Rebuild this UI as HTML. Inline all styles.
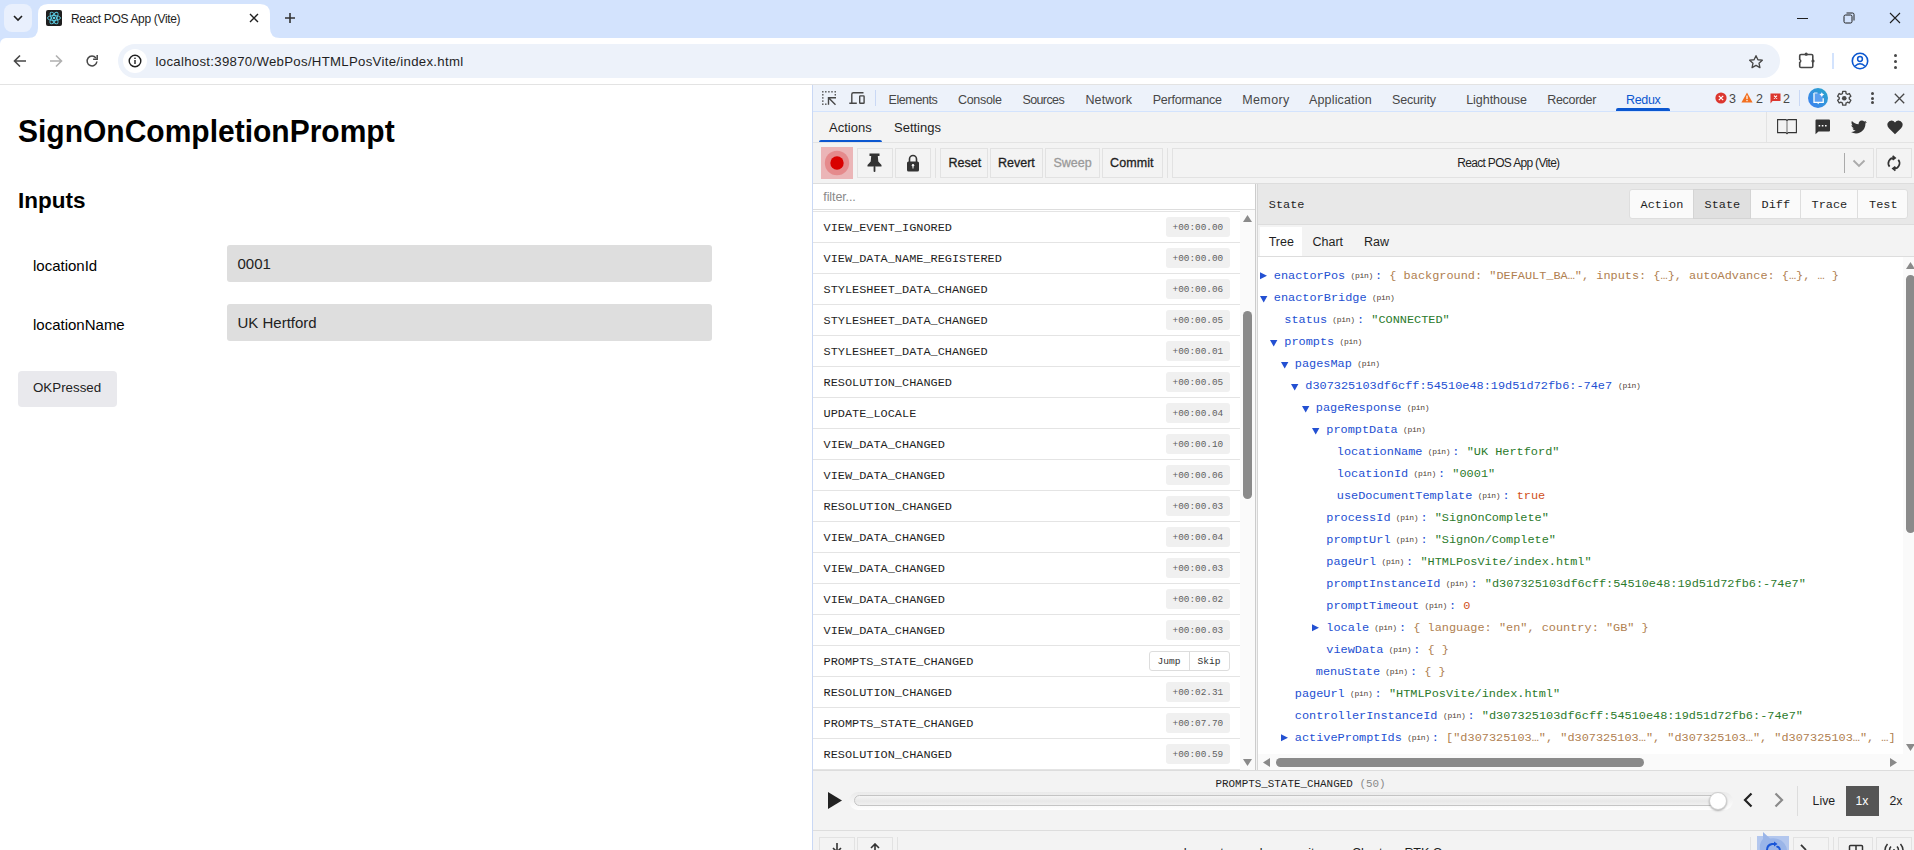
<!DOCTYPE html><html><head><meta charset="utf-8"><style>html,body{margin:0;padding:0;}body{width:1914px;height:850px;overflow:hidden;position:relative;background:#fff;font-family:"Liberation Sans",sans-serif;}div,svg{box-sizing:border-box;}svg{position:absolute;}</style></head><body>
<div style="position:absolute;left:0px;top:0px;width:1914px;height:38px;background:#d3e3fd"></div>
<div style="position:absolute;left:4px;top:4px;width:28px;height:28px;background:#e9f0fd;border-radius:8px"></div>
<svg style="left:12px;top:14px" width="12" height="8" viewBox="0 0 12 8"><path d="M2 2 L6 6 L10 2" fill="none" stroke="#1f1f1f" stroke-width="1.6"/></svg>
<svg style="left:28px;top:4px" width="252" height="34" viewBox="0 0 252 34"><path d="M0 34 Q10 34 10 24 L10 10 Q10 0 20 0 L232 0 Q242 0 242 10 L242 24 Q242 34 252 34 Z" fill="#ffffff"/></svg>
<div style="position:absolute;left:46px;top:10px;width:16px;height:16px;background:#1f1f1f;border-radius:2px"></div>
<svg style="left:46px;top:10px" width="16" height="16" viewBox="0 0 16 16"><g fill="none" stroke="#5ccfe6" stroke-width="0.9"><ellipse cx="8" cy="8" rx="6.5" ry="2.5"/><ellipse cx="8" cy="8" rx="6.5" ry="2.5" transform="rotate(60 8 8)"/><ellipse cx="8" cy="8" rx="6.5" ry="2.5" transform="rotate(120 8 8)"/></g><circle cx="8" cy="8" r="1.3" fill="#5ccfe6"/></svg>
<div style="position:absolute;left:71px;top:13.34px;font:normal 12px/12px 'Liberation Sans', sans-serif;color:#1f1f1f;white-space:pre;letter-spacing:-0.327px;">React POS App (Vite)</div>
<svg style="left:249px;top:13px" width="10" height="10" viewBox="0 0 10 10"><path d="M1 1 L9 9 M9 1 L1 9" stroke="#1f1f1f" stroke-width="1.4"/></svg>
<svg style="left:285px;top:13px" width="10" height="10" viewBox="0 0 10 10"><path d="M5 0 V10 M0 5 H10" stroke="#333" stroke-width="1.6"/></svg>
<div style="position:absolute;left:1797px;top:18px;width:11px;height:1px;background:#1f1f1f"></div>
<svg style="left:1843px;top:12px" width="12" height="12" viewBox="0 0 12 12"><rect x="1" y="3" width="8" height="8" rx="1.5" fill="none" stroke="#1f1f1f" stroke-width="1"/><path d="M3.5 1 H9.5 Q11 1 11 2.5 V8.5" fill="none" stroke="#1f1f1f" stroke-width="1"/></svg>
<svg style="left:1889px;top:12px" width="12" height="12" viewBox="0 0 12 12"><path d="M1 1 L11 11 M11 1 L1 11" stroke="#1f1f1f" stroke-width="1.1"/></svg>
<div style="position:absolute;left:0px;top:38px;width:1914px;height:46px;background:#ffffff"></div>
<div style="position:absolute;left:0px;top:84px;width:1914px;height:1px;background:#e3e3e3"></div>
<svg style="left:0px;top:38px" width="6" height="6" viewBox="0 0 6 6"><path d="M0 0 H6 A6 6 0 0 0 0 6 Z" fill="#d3e3fd"/></svg>
<svg style="left:13px;top:54px" width="14" height="14" viewBox="0 0 14 14"><path d="M13 7 H2 M7 1.5 L1.5 7 L7 12.5" fill="none" stroke="#474747" stroke-width="1.6"/></svg>
<svg style="left:49px;top:54px" width="14" height="14" viewBox="0 0 14 14"><path d="M1 7 H12 M7 1.5 L12.5 7 L7 12.5" fill="none" stroke="#b0b0b0" stroke-width="1.6"/></svg>
<svg style="left:85px;top:54px" width="14" height="14" viewBox="0 0 14 14"><path d="M11.9 7.5 A4.9 4.9 0 1 1 10.9 4" fill="none" stroke="#474747" stroke-width="1.5"/><path d="M12.2 1 V5.3 H8.1" fill="none" stroke="#474747" stroke-width="1.5"/></svg>
<div style="position:absolute;left:118px;top:44px;width:1662px;height:34px;background:#edf2fa;border-radius:17px"></div>
<div style="position:absolute;left:123px;top:49px;width:24px;height:24px;background:#ffffff;border-radius:12px"></div>
<svg style="left:128px;top:54px" width="14" height="14" viewBox="0 0 14 14"><circle cx="7" cy="7" r="5.8" fill="none" stroke="#1f1f1f" stroke-width="1.4"/><rect x="6.3" y="6" width="1.4" height="4" fill="#1f1f1f"/><rect x="6.3" y="3.6" width="1.4" height="1.4" fill="#1f1f1f"/></svg>
<div style="position:absolute;left:155.5px;top:55.32px;font:normal 13.2px/13.2px 'Liberation Sans', sans-serif;color:#1f1f1f;white-space:pre;letter-spacing:0.306px;">localhost:39870/WebPos/HTMLPosVite/index.html</div>
<svg style="left:1748px;top:54px" width="16" height="16" viewBox="0 0 24 24"><path d="M12 2.5 L14.9 8.6 L21.5 9.3 L16.5 13.8 L17.9 20.4 L12 17 L6.1 20.4 L7.5 13.8 L2.5 9.3 L9.1 8.6 Z" fill="none" stroke="#474747" stroke-width="2" stroke-linejoin="round"/></svg>
<svg style="left:1797px;top:51px" width="20" height="19" viewBox="0 0 20 19"><path d="M4 3.5 H14.5 Q15.8 3.5 15.8 4.8 V15.2 Q15.8 16.5 14.5 16.5 H4 Q2.7 16.5 2.7 15.2 V11.6 A1.8 1.8 0 0 0 2.7 8.4 V4.8 Q2.7 3.5 4 3.5 Z" fill="none" stroke="#474747" stroke-width="1.6"/><circle cx="9.2" cy="3.2" r="1.6" fill="#474747"/><circle cx="16" cy="10" r="1.6" fill="#474747"/></svg>
<div style="position:absolute;left:1832px;top:53px;width:2px;height:16px;background:#d3e3fd"></div>
<svg style="left:1851px;top:52px" width="18" height="18" viewBox="0 0 18 18"><circle cx="9" cy="9" r="7.7" fill="none" stroke="#0b57d0" stroke-width="1.6"/><circle cx="9" cy="7" r="2.4" fill="none" stroke="#0b57d0" stroke-width="1.5"/><path d="M4.2 14 Q9 9.5 13.8 14" fill="none" stroke="#0b57d0" stroke-width="1.5"/></svg>
<div style="position:absolute;left:1894px;top:54px;width:3px;height:3px;background:#474747;border-radius:50%"></div>
<div style="position:absolute;left:1894px;top:60px;width:3px;height:3px;background:#474747;border-radius:50%"></div>
<div style="position:absolute;left:1894px;top:66px;width:3px;height:3px;background:#474747;border-radius:50%"></div>
<div style="position:absolute;left:18px;top:117.00px;font:bold 30px/30px 'Liberation Sans', sans-serif;color:#000;white-space:pre;letter-spacing:0.000px;transform:scaleY(1.035);transform-origin:0 24px;">SignOnCompletionPrompt</div>
<div style="position:absolute;left:18px;top:189.75px;font:bold 22.5px/22.5px 'Liberation Sans', sans-serif;color:#000;white-space:pre;letter-spacing:0.000px;">Inputs</div>
<div style="position:absolute;left:33px;top:258.20px;font:normal 15px/15px 'Liberation Sans', sans-serif;color:#000;white-space:pre;letter-spacing:0.000px;">locationId</div>
<div style="position:absolute;left:33px;top:316.80px;font:normal 15px/15px 'Liberation Sans', sans-serif;color:#000;white-space:pre;letter-spacing:0.000px;">locationName</div>
<div style="position:absolute;left:227px;top:245px;width:485px;height:37px;background:#dedede;border-radius:3px"></div>
<div style="position:absolute;left:227px;top:304px;width:485px;height:37px;background:#dedede;border-radius:3px"></div>
<div style="position:absolute;left:237.5px;top:256.40px;font:normal 15px/15px 'Liberation Sans', sans-serif;color:#222;white-space:pre;letter-spacing:0.000px;">0001</div>
<div style="position:absolute;left:237.5px;top:315.40px;font:normal 15px/15px 'Liberation Sans', sans-serif;color:#222;white-space:pre;letter-spacing:0.000px;">UK Hertford</div>
<div style="position:absolute;left:18px;top:371px;width:99px;height:36px;background:#e9e9ed;border-radius:4px"></div>
<div style="position:absolute;left:33px;top:381.41px;font:normal 13.333px/13.333px 'Liberation Sans', sans-serif;color:#222;white-space:pre;letter-spacing:0.000px;">OKPressed</div>
<div style="position:absolute;left:812px;top:85px;width:1102px;height:765px;background:#f3f3f3"></div>
<div style="position:absolute;left:812px;top:85px;width:1px;height:765px;background:#c9d8f5"></div>
<div style="position:absolute;left:813px;top:85px;width:1101px;height:26px;background:#edf2fa"></div>
<div style="position:absolute;left:813px;top:111px;width:1101px;height:1px;background:#d3e3fd"></div>
<svg style="left:816px;top:86px" width="56" height="24" viewBox="0 0 56 24"><rect x="6.10" y="5.10" width="1.4" height="1.4" fill="#474747"/><rect x="9.10" y="5.10" width="1.4" height="1.4" fill="#474747"/><rect x="12.20" y="5.10" width="1.4" height="1.4" fill="#474747"/><rect x="15.30" y="5.10" width="1.4" height="1.4" fill="#474747"/><rect x="18.50" y="5.10" width="1.4" height="1.4" fill="#474747"/><rect x="6.10" y="8.10" width="1.4" height="1.4" fill="#474747"/><rect x="6.10" y="11.20" width="1.4" height="1.4" fill="#474747"/><rect x="6.10" y="14.40" width="1.4" height="1.4" fill="#474747"/><rect x="6.10" y="17.50" width="1.4" height="1.4" fill="#474747"/><rect x="9.10" y="17.50" width="1.4" height="1.4" fill="#474747"/><rect x="18.60" y="8.10" width="1.4" height="1.4" fill="#474747"/><path d="M12.5 18.7 V11.7 H20 M12.5 11.7 L19.5 18.7" fill="none" stroke="#474747" stroke-width="1.4"/><path d="M35.8 17.5 V8.3 Q35.8 6.7 37.4 6.7 H47.5 M33.3 17.3 H40.8" fill="none" stroke="#474747" stroke-width="1.4"/><rect x="43.7" y="9.9" width="4.4" height="7.4" rx="0.6" fill="none" stroke="#474747" stroke-width="1.4"/></svg>
<div style="position:absolute;left:875px;top:90px;width:1px;height:16px;background:#c9d8f5"></div>
<div style="position:absolute;left:888.5px;top:93.62px;font:normal 12.5px/12.5px 'Liberation Sans', sans-serif;color:#474747;white-space:pre;letter-spacing:-0.401px;">Elements</div>
<div style="position:absolute;left:958px;top:93.62px;font:normal 12.5px/12.5px 'Liberation Sans', sans-serif;color:#474747;white-space:pre;letter-spacing:-0.310px;">Console</div>
<div style="position:absolute;left:1022.4px;top:93.62px;font:normal 12.5px/12.5px 'Liberation Sans', sans-serif;color:#474747;white-space:pre;letter-spacing:-0.593px;">Sources</div>
<div style="position:absolute;left:1085.4px;top:93.62px;font:normal 12.5px/12.5px 'Liberation Sans', sans-serif;color:#474747;white-space:pre;letter-spacing:0.143px;">Network</div>
<div style="position:absolute;left:1152.7px;top:93.62px;font:normal 12.5px/12.5px 'Liberation Sans', sans-serif;color:#474747;white-space:pre;letter-spacing:-0.226px;">Performance</div>
<div style="position:absolute;left:1242.3px;top:93.62px;font:normal 12.5px/12.5px 'Liberation Sans', sans-serif;color:#474747;white-space:pre;letter-spacing:0.352px;">Memory</div>
<div style="position:absolute;left:1309px;top:93.62px;font:normal 12.5px/12.5px 'Liberation Sans', sans-serif;color:#474747;white-space:pre;letter-spacing:0.155px;">Application</div>
<div style="position:absolute;left:1392px;top:93.62px;font:normal 12.5px/12.5px 'Liberation Sans', sans-serif;color:#474747;white-space:pre;letter-spacing:-0.165px;">Security</div>
<div style="position:absolute;left:1466.2px;top:93.62px;font:normal 12.5px/12.5px 'Liberation Sans', sans-serif;color:#474747;white-space:pre;letter-spacing:-0.040px;">Lighthouse</div>
<div style="position:absolute;left:1547.3px;top:93.62px;font:normal 12.5px/12.5px 'Liberation Sans', sans-serif;color:#474747;white-space:pre;letter-spacing:-0.330px;">Recorder</div>
<div style="position:absolute;left:1626.1px;top:93.62px;font:normal 12.5px/12.5px 'Liberation Sans', sans-serif;color:#0b57d0;white-space:pre;letter-spacing:-0.358px;">Redux</div>
<div style="position:absolute;left:1616px;top:108px;width:54px;height:3px;background:#0b57d0;border-radius:2px 2px 0 0"></div>
<svg style="left:1715px;top:92px" width="12" height="12" viewBox="0 0 12 12"><circle cx="6" cy="6" r="5.6" fill="#dc362e"/><path d="M3.8 3.8 L8.2 8.2 M8.2 3.8 L3.8 8.2" stroke="#fff" stroke-width="1.2"/></svg>
<div style="position:absolute;left:1729px;top:92.92px;font:normal 12.5px/12.5px 'Liberation Sans', sans-serif;color:#474747;white-space:pre;letter-spacing:0.000px;">3</div>
<svg style="left:1741px;top:92px" width="12" height="11" viewBox="0 0 12 11"><path d="M6 0.5 L11.6 10.5 H0.4 Z" fill="#f26f1f"/><rect x="5.4" y="3.6" width="1.2" height="3.6" fill="#fff"/><rect x="5.4" y="8" width="1.2" height="1.2" fill="#fff"/></svg>
<div style="position:absolute;left:1756px;top:92.92px;font:normal 12.5px/12.5px 'Liberation Sans', sans-serif;color:#474747;white-space:pre;letter-spacing:0.000px;">2</div>
<svg style="left:1770px;top:93px" width="12" height="11" viewBox="0 0 12 11"><path d="M0.5 0.5 H10.5 V8 H2.5 L0.5 10.5 Z" fill="#dc362e"/><path d="M4 2.6 L7 5.6 M7 2.6 L4 5.6" stroke="#fff" stroke-width="1.1"/></svg>
<div style="position:absolute;left:1783px;top:93.42px;font:normal 12.5px/12.5px 'Liberation Sans', sans-serif;color:#474747;white-space:pre;letter-spacing:0.000px;">2</div>
<div style="position:absolute;left:1799px;top:90px;width:1px;height:16px;background:#c9d8f5"></div>
<svg style="left:1808px;top:88px" width="20" height="20" viewBox="0 0 20 20"><defs><linearGradient id="g1" x1="0" y1="1" x2="1" y2="0"><stop offset="0" stop-color="#3f7ff2"/><stop offset="1" stop-color="#27a6c9"/></linearGradient></defs><circle cx="10" cy="10" r="10" fill="url(#g1)"/><rect x="6.3" y="5.4" width="8.4" height="9" fill="#5b9ff0"/><path d="M6 5 V14.4 H15.2 V10.2" fill="none" stroke="#fff" stroke-width="1.3"/><path d="M6 5 H9.5" stroke="#cfe3fb" stroke-width="1.2"/><path d="M8.8 14.2 L10.2 16.2 L11.6 14.2 Z" fill="#fff"/><path d="M13.8 4.2 L14.6 5.8 L16.2 6.6 L14.6 7.4 L13.8 9 L13 7.4 L11.4 6.6 L13 5.8 Z" fill="#fff"/></svg>
<svg style="left:1834.8px;top:88.6px" width="18.5" height="18.5" viewBox="0 0 24 24"><path d="M19.4 13a7.5 7.5 0 0 0 0-2l2.1-1.6-2-3.5-2.5 1a7.6 7.6 0 0 0-1.7-1L14.9 3h-4l-.4 2.9a7.6 7.6 0 0 0-1.7 1l-2.5-1-2 3.5L6.4 11a7.5 7.5 0 0 0 0 2l-2.1 1.6 2 3.5 2.5-1a7.6 7.6 0 0 0 1.7 1l.4 2.9h4l.4-2.9a7.6 7.6 0 0 0 1.7-1l2.5 1 2-3.5z" fill="none" stroke="#474747" stroke-width="1.75" stroke-linejoin="round" transform="translate(-0.9 0)"/><circle cx="12" cy="12" r="3" fill="#474747"/></svg>
<div style="position:absolute;left:1870.6px;top:91.9px;width:3.0px;height:3.0px;background:#474747;border-radius:50%"></div>
<div style="position:absolute;left:1870.6px;top:96.5px;width:3.0px;height:3.0px;background:#474747;border-radius:50%"></div>
<div style="position:absolute;left:1870.6px;top:101.0px;width:3.0px;height:3.0px;background:#474747;border-radius:50%"></div>
<svg style="left:1893.5px;top:92.5px" width="11" height="11" viewBox="0 0 11 11"><path d="M0.8 0.8 L10.2 10.2 M10.2 0.8 L0.8 10.2" stroke="#474747" stroke-width="1.3"/></svg>
<div style="position:absolute;left:829px;top:120.99px;font:normal 13px/13px 'Liberation Sans', sans-serif;color:#1f1f1f;white-space:pre;letter-spacing:0.000px;">Actions</div>
<div style="position:absolute;left:894px;top:120.99px;font:normal 13px/13px 'Liberation Sans', sans-serif;color:#1f1f1f;white-space:pre;letter-spacing:0.000px;">Settings</div>
<div style="position:absolute;left:819px;top:140px;width:63px;height:2px;background:#0b57d0;border-radius:2px 2px 0 0"></div>
<div style="position:absolute;left:813px;top:142px;width:1101px;height:1px;background:#e3e3e3"></div>
<div style="position:absolute;left:1766px;top:112px;width:1px;height:30px;background:#e3e3e3"></div>
<svg style="left:1776px;top:118px" width="22" height="18" viewBox="0 0 22 18"><path d="M1.6 1.6 H9.6 Q11 1.6 11 3 Q11 1.6 12.4 1.6 H20.4 V14.6 H12.4 Q11 14.6 11 16 Q11 14.6 9.6 14.6 H1.6 Z" fill="none" stroke="#333" stroke-width="1.1"/><path d="M11 3 V15.6" stroke="#777" stroke-width="1.1"/><path d="M10 15.2 L11 16.6 L12 15.2 Z" fill="#333"/></svg>
<svg style="left:1815px;top:119px" width="16" height="16" viewBox="0 0 16 16"><path d="M0.5 1.5 Q0.5 0.5 1.5 0.5 H14 Q15 0.5 15 1.5 V11.5 Q15 12.5 14 12.5 H3.5 L0.5 15.3 Z" fill="#333"/><rect x="3.6" y="6" width="1.6" height="1.5" fill="#fff"/><rect x="6.8" y="6" width="1.6" height="1.5" fill="#fff"/><rect x="10" y="6" width="1.6" height="1.5" fill="#fff"/></svg>
<svg style="left:1851px;top:120px" width="16" height="14" viewBox="0 0 24 20"><path d="M23.6 2.4c-.9.4-1.8.6-2.8.8 1-.6 1.8-1.6 2.1-2.7-.9.6-2 1-3.1 1.2A4.9 4.9 0 0 0 11.5 6C7.4 5.8 3.8 3.9 1.4 1c-1.3 2.3-.6 5.1 1.5 6.6-.8 0-1.6-.2-2.2-.6 0 2.400 1.7 4.4 3.9 4.900-.7.2-1.500.2-2.200.1.6 2 2.500 3.400 4.600 3.400A9.900 9.900 0 0 1 0 17.400 14 14 0 0 0 7.500 19.600c9.100 0 14.100-7.500 14.100-14.100v-.6c1-.7 1.800-1.600 2.500-2.500z" fill="#333"/></svg>
<svg style="left:1887px;top:119.5px" width="16" height="15" viewBox="0 0 16 15"><path d="M8 14.3 L1.9 8.3 Q-0.4 5.9 0.7 3 Q2 0.4 4.6 0.5 Q6.7 0.6 8 2.6 Q9.3 0.6 11.4 0.5 Q14 0.4 15.3 3 Q16.4 5.9 14.1 8.3 Z" fill="#333"/></svg>
<div style="position:absolute;left:813px;top:183px;width:1101px;height:1px;background:#dddddd"></div>
<div style="position:absolute;left:821px;top:147px;width:32px;height:32px;background:#ebb5b7"></div>
<svg style="left:824px;top:150px" width="26" height="26" viewBox="0 0 26 26"><circle cx="13" cy="13" r="12.2" fill="#e58a8c"/><circle cx="13" cy="13" r="6.7" fill="#d90000"/></svg>
<div style="position:absolute;left:857px;top:148px;width:36px;height:30px;border:1px solid #e2e2e2"></div>
<svg style="left:866px;top:153px" width="17" height="20" viewBox="0 0 17 20"><path d="M3.5 0.5 H13.5 V3 H11.8 L12.3 8.5 L15.5 12 V13.5 H1.5 V12 L4.7 8.5 L5.2 3 H3.5 Z" fill="#333"/><rect x="7.6" y="13" width="1.8" height="6" rx="0.8" fill="#333"/></svg>
<div style="position:absolute;left:895px;top:148px;width:36px;height:30px;border:1px solid #e2e2e2"></div>
<svg style="left:906px;top:154px" width="14" height="18" viewBox="0 0 14 18"><path d="M3.5 8 V5 A3.5 3.5 0 0 1 10.5 5 V8" fill="none" stroke="#333" stroke-width="1.6"/><rect x="1" y="7.5" width="12" height="10" rx="1.6" fill="#333"/><circle cx="7" cy="11.3" r="1.2" fill="#fff"/><rect x="6.4" y="11.5" width="1.2" height="3" fill="#ddd"/></svg>
<div style="position:absolute;left:935px;top:148px;width:1px;height:30px;background:#e2e2e2"></div>
<div style="position:absolute;left:940px;top:148px;width:48px;height:30px;border:1px solid #e2e2e2"></div>
<div style="position:absolute;left:990px;top:148px;width:53px;height:30px;border:1px solid #e2e2e2"></div>
<div style="position:absolute;left:1045px;top:148px;width:55px;height:30px;border:1px solid #e2e2e2"></div>
<div style="position:absolute;left:1102px;top:148px;width:61px;height:30px;border:1px solid #e2e2e2"></div>
<div style="position:absolute;left:948.5px;top:156.92px;font:normal 12.5px/12.5px 'Liberation Sans', sans-serif;color:#1f1f1f;white-space:pre;letter-spacing:0.000px;-webkit-text-stroke:0.3px currentColor;">Reset</div>
<div style="position:absolute;left:998px;top:156.92px;font:normal 12.5px/12.5px 'Liberation Sans', sans-serif;color:#1f1f1f;white-space:pre;letter-spacing:0.000px;-webkit-text-stroke:0.3px currentColor;">Revert</div>
<div style="position:absolute;left:1053.5px;top:156.92px;font:normal 12.5px/12.5px 'Liberation Sans', sans-serif;color:#9a9a9a;white-space:pre;letter-spacing:0.000px;-webkit-text-stroke:0.3px currentColor;">Sweep</div>
<div style="position:absolute;left:1110px;top:156.92px;font:normal 12.5px/12.5px 'Liberation Sans', sans-serif;color:#1f1f1f;white-space:pre;letter-spacing:0.100px;-webkit-text-stroke:0.3px currentColor;">Commit</div>
<div style="position:absolute;left:1167px;top:148px;width:1px;height:30px;background:#e2e2e2"></div>
<div style="position:absolute;left:1172px;top:148px;width:702px;height:30px;border:1px solid #e2e2e2"></div>
<div style="position:absolute;left:1457.3px;top:156.84px;font:normal 12px/12px 'Liberation Sans', sans-serif;color:#1f1f1f;white-space:pre;letter-spacing:-0.685px;">React POS App (Vite)</div>
<div style="position:absolute;left:1844px;top:153px;width:1px;height:20px;background:#aaaaaa"></div>
<svg style="left:1852px;top:159px" width="14" height="9" viewBox="0 0 14 9"><path d="M1.5 1.5 L7 7 L12.5 1.5" fill="none" stroke="#aaaaaa" stroke-width="1.8"/></svg>
<div style="position:absolute;left:1876px;top:148px;width:36px;height:30px;border:1px solid #e2e2e2"></div>
<svg style="left:1884px;top:153px" width="20" height="20" viewBox="0 0 20 20"><path d="M10 4.8 A5.4 5.4 0 0 0 5.6 13.6 M14.3 6.8 A5.4 5.4 0 0 1 10 15.6 M8.6 2.9 L11.1 4.9 L8.6 6.9 M11.4 13.6 L8.9 15.6 L11.4 17.6" fill="none" stroke="#333" stroke-width="1.7"/></svg>
<div style="position:absolute;left:813px;top:184px;width:442px;height:586px;background:#ffffff"></div>
<div style="position:absolute;left:823.3px;top:190.72px;font:normal 12.5px/12.5px 'Liberation Sans', sans-serif;color:#8a8a8a;white-space:pre;letter-spacing:-0.100px;">filter...</div>
<div style="position:absolute;left:813px;top:209px;width:442px;height:1px;background:#dddddd"></div>
<div style="position:absolute;left:813px;top:211px;width:427px;height:1px;background:#e4e4e4"></div>
<div style="position:absolute;left:823.5px;top:222.88px;font:normal 11.9px/11.9px 'Liberation Mono', monospace;color:#1f1f1f;white-space:pre;letter-spacing:0.000px;transform:scaleY(0.95);transform-origin:0 9.12px;">VIEW_EVENT_IGNORED</div>
<div style="position:absolute;left:1166px;top:217px;width:64px;height:20px;background:#f0f0f0;border-radius:3px"></div>
<div style="position:absolute;left:1172.5px;top:222.60px;font:normal 9.4px/9.4px 'Liberation Mono', monospace;color:#5f5f5f;white-space:pre;letter-spacing:0.000px;">+00:00.00</div>
<div style="position:absolute;left:813px;top:242px;width:427px;height:1px;background:#e4e4e4"></div>
<div style="position:absolute;left:823.5px;top:253.88px;font:normal 11.9px/11.9px 'Liberation Mono', monospace;color:#1f1f1f;white-space:pre;letter-spacing:0.000px;transform:scaleY(0.95);transform-origin:0 9.12px;">VIEW_DATA_NAME_REGISTERED</div>
<div style="position:absolute;left:1166px;top:248px;width:64px;height:20px;background:#f0f0f0;border-radius:3px"></div>
<div style="position:absolute;left:1172.5px;top:253.60px;font:normal 9.4px/9.4px 'Liberation Mono', monospace;color:#5f5f5f;white-space:pre;letter-spacing:0.000px;">+00:00.00</div>
<div style="position:absolute;left:813px;top:273px;width:427px;height:1px;background:#e4e4e4"></div>
<div style="position:absolute;left:823.5px;top:284.88px;font:normal 11.9px/11.9px 'Liberation Mono', monospace;color:#1f1f1f;white-space:pre;letter-spacing:0.000px;transform:scaleY(0.95);transform-origin:0 9.12px;">STYLESHEET_DATA_CHANGED</div>
<div style="position:absolute;left:1166px;top:279px;width:64px;height:20px;background:#f0f0f0;border-radius:3px"></div>
<div style="position:absolute;left:1172.5px;top:284.60px;font:normal 9.4px/9.4px 'Liberation Mono', monospace;color:#5f5f5f;white-space:pre;letter-spacing:0.000px;">+00:00.06</div>
<div style="position:absolute;left:813px;top:304px;width:427px;height:1px;background:#e4e4e4"></div>
<div style="position:absolute;left:823.5px;top:315.88px;font:normal 11.9px/11.9px 'Liberation Mono', monospace;color:#1f1f1f;white-space:pre;letter-spacing:0.000px;transform:scaleY(0.95);transform-origin:0 9.12px;">STYLESHEET_DATA_CHANGED</div>
<div style="position:absolute;left:1166px;top:310px;width:64px;height:20px;background:#f0f0f0;border-radius:3px"></div>
<div style="position:absolute;left:1172.5px;top:315.60px;font:normal 9.4px/9.4px 'Liberation Mono', monospace;color:#5f5f5f;white-space:pre;letter-spacing:0.000px;">+00:00.05</div>
<div style="position:absolute;left:813px;top:335px;width:427px;height:1px;background:#e4e4e4"></div>
<div style="position:absolute;left:823.5px;top:346.88px;font:normal 11.9px/11.9px 'Liberation Mono', monospace;color:#1f1f1f;white-space:pre;letter-spacing:0.000px;transform:scaleY(0.95);transform-origin:0 9.12px;">STYLESHEET_DATA_CHANGED</div>
<div style="position:absolute;left:1166px;top:341px;width:64px;height:20px;background:#f0f0f0;border-radius:3px"></div>
<div style="position:absolute;left:1172.5px;top:346.60px;font:normal 9.4px/9.4px 'Liberation Mono', monospace;color:#5f5f5f;white-space:pre;letter-spacing:0.000px;">+00:00.01</div>
<div style="position:absolute;left:813px;top:366px;width:427px;height:1px;background:#e4e4e4"></div>
<div style="position:absolute;left:823.5px;top:377.88px;font:normal 11.9px/11.9px 'Liberation Mono', monospace;color:#1f1f1f;white-space:pre;letter-spacing:0.000px;transform:scaleY(0.95);transform-origin:0 9.12px;">RESOLUTION_CHANGED</div>
<div style="position:absolute;left:1166px;top:372px;width:64px;height:20px;background:#f0f0f0;border-radius:3px"></div>
<div style="position:absolute;left:1172.5px;top:377.60px;font:normal 9.4px/9.4px 'Liberation Mono', monospace;color:#5f5f5f;white-space:pre;letter-spacing:0.000px;">+00:00.05</div>
<div style="position:absolute;left:813px;top:397px;width:427px;height:1px;background:#e4e4e4"></div>
<div style="position:absolute;left:823.5px;top:408.88px;font:normal 11.9px/11.9px 'Liberation Mono', monospace;color:#1f1f1f;white-space:pre;letter-spacing:0.000px;transform:scaleY(0.95);transform-origin:0 9.12px;">UPDATE_LOCALE</div>
<div style="position:absolute;left:1166px;top:403px;width:64px;height:20px;background:#f0f0f0;border-radius:3px"></div>
<div style="position:absolute;left:1172.5px;top:408.60px;font:normal 9.4px/9.4px 'Liberation Mono', monospace;color:#5f5f5f;white-space:pre;letter-spacing:0.000px;">+00:00.04</div>
<div style="position:absolute;left:813px;top:428px;width:427px;height:1px;background:#e4e4e4"></div>
<div style="position:absolute;left:823.5px;top:439.88px;font:normal 11.9px/11.9px 'Liberation Mono', monospace;color:#1f1f1f;white-space:pre;letter-spacing:0.000px;transform:scaleY(0.95);transform-origin:0 9.12px;">VIEW_DATA_CHANGED</div>
<div style="position:absolute;left:1166px;top:434px;width:64px;height:20px;background:#f0f0f0;border-radius:3px"></div>
<div style="position:absolute;left:1172.5px;top:439.60px;font:normal 9.4px/9.4px 'Liberation Mono', monospace;color:#5f5f5f;white-space:pre;letter-spacing:0.000px;">+00:00.10</div>
<div style="position:absolute;left:813px;top:459px;width:427px;height:1px;background:#e4e4e4"></div>
<div style="position:absolute;left:823.5px;top:470.88px;font:normal 11.9px/11.9px 'Liberation Mono', monospace;color:#1f1f1f;white-space:pre;letter-spacing:0.000px;transform:scaleY(0.95);transform-origin:0 9.12px;">VIEW_DATA_CHANGED</div>
<div style="position:absolute;left:1166px;top:465px;width:64px;height:20px;background:#f0f0f0;border-radius:3px"></div>
<div style="position:absolute;left:1172.5px;top:470.60px;font:normal 9.4px/9.4px 'Liberation Mono', monospace;color:#5f5f5f;white-space:pre;letter-spacing:0.000px;">+00:00.06</div>
<div style="position:absolute;left:813px;top:490px;width:427px;height:1px;background:#e4e4e4"></div>
<div style="position:absolute;left:823.5px;top:501.88px;font:normal 11.9px/11.9px 'Liberation Mono', monospace;color:#1f1f1f;white-space:pre;letter-spacing:0.000px;transform:scaleY(0.95);transform-origin:0 9.12px;">RESOLUTION_CHANGED</div>
<div style="position:absolute;left:1166px;top:496px;width:64px;height:20px;background:#f0f0f0;border-radius:3px"></div>
<div style="position:absolute;left:1172.5px;top:501.60px;font:normal 9.4px/9.4px 'Liberation Mono', monospace;color:#5f5f5f;white-space:pre;letter-spacing:0.000px;">+00:00.03</div>
<div style="position:absolute;left:813px;top:521px;width:427px;height:1px;background:#e4e4e4"></div>
<div style="position:absolute;left:823.5px;top:532.88px;font:normal 11.9px/11.9px 'Liberation Mono', monospace;color:#1f1f1f;white-space:pre;letter-spacing:0.000px;transform:scaleY(0.95);transform-origin:0 9.12px;">VIEW_DATA_CHANGED</div>
<div style="position:absolute;left:1166px;top:527px;width:64px;height:20px;background:#f0f0f0;border-radius:3px"></div>
<div style="position:absolute;left:1172.5px;top:532.60px;font:normal 9.4px/9.4px 'Liberation Mono', monospace;color:#5f5f5f;white-space:pre;letter-spacing:0.000px;">+00:00.04</div>
<div style="position:absolute;left:813px;top:552px;width:427px;height:1px;background:#e4e4e4"></div>
<div style="position:absolute;left:823.5px;top:563.88px;font:normal 11.9px/11.9px 'Liberation Mono', monospace;color:#1f1f1f;white-space:pre;letter-spacing:0.000px;transform:scaleY(0.95);transform-origin:0 9.12px;">VIEW_DATA_CHANGED</div>
<div style="position:absolute;left:1166px;top:558px;width:64px;height:20px;background:#f0f0f0;border-radius:3px"></div>
<div style="position:absolute;left:1172.5px;top:563.60px;font:normal 9.4px/9.4px 'Liberation Mono', monospace;color:#5f5f5f;white-space:pre;letter-spacing:0.000px;">+00:00.03</div>
<div style="position:absolute;left:813px;top:583px;width:427px;height:1px;background:#e4e4e4"></div>
<div style="position:absolute;left:823.5px;top:594.88px;font:normal 11.9px/11.9px 'Liberation Mono', monospace;color:#1f1f1f;white-space:pre;letter-spacing:0.000px;transform:scaleY(0.95);transform-origin:0 9.12px;">VIEW_DATA_CHANGED</div>
<div style="position:absolute;left:1166px;top:589px;width:64px;height:20px;background:#f0f0f0;border-radius:3px"></div>
<div style="position:absolute;left:1172.5px;top:594.60px;font:normal 9.4px/9.4px 'Liberation Mono', monospace;color:#5f5f5f;white-space:pre;letter-spacing:0.000px;">+00:00.02</div>
<div style="position:absolute;left:813px;top:614px;width:427px;height:1px;background:#e4e4e4"></div>
<div style="position:absolute;left:823.5px;top:625.88px;font:normal 11.9px/11.9px 'Liberation Mono', monospace;color:#1f1f1f;white-space:pre;letter-spacing:0.000px;transform:scaleY(0.95);transform-origin:0 9.12px;">VIEW_DATA_CHANGED</div>
<div style="position:absolute;left:1166px;top:620px;width:64px;height:20px;background:#f0f0f0;border-radius:3px"></div>
<div style="position:absolute;left:1172.5px;top:625.60px;font:normal 9.4px/9.4px 'Liberation Mono', monospace;color:#5f5f5f;white-space:pre;letter-spacing:0.000px;">+00:00.03</div>
<div style="position:absolute;left:813px;top:645px;width:427px;height:1px;background:#e4e4e4"></div>
<div style="position:absolute;left:823.5px;top:656.88px;font:normal 11.9px/11.9px 'Liberation Mono', monospace;color:#1f1f1f;white-space:pre;letter-spacing:0.000px;transform:scaleY(0.95);transform-origin:0 9.12px;">PROMPTS_STATE_CHANGED</div>
<div style="position:absolute;left:1149px;top:651px;width:81px;height:20px;background:#fff;border:1px solid #dddddd;border-radius:3px"></div>
<div style="position:absolute;left:1189px;top:652px;width:1px;height:18px;background:#dddddd"></div>
<div style="position:absolute;left:1157.5px;top:657.15px;font:normal 9.6px/9.6px 'Liberation Mono', monospace;color:#333;white-space:pre;letter-spacing:0.000px;">Jump</div>
<div style="position:absolute;left:1197.5px;top:657.15px;font:normal 9.6px/9.6px 'Liberation Mono', monospace;color:#333;white-space:pre;letter-spacing:0.000px;">Skip</div>
<div style="position:absolute;left:813px;top:676px;width:427px;height:1px;background:#e4e4e4"></div>
<div style="position:absolute;left:823.5px;top:687.88px;font:normal 11.9px/11.9px 'Liberation Mono', monospace;color:#1f1f1f;white-space:pre;letter-spacing:0.000px;transform:scaleY(0.95);transform-origin:0 9.12px;">RESOLUTION_CHANGED</div>
<div style="position:absolute;left:1166px;top:682px;width:64px;height:20px;background:#f0f0f0;border-radius:3px"></div>
<div style="position:absolute;left:1172.5px;top:687.60px;font:normal 9.4px/9.4px 'Liberation Mono', monospace;color:#5f5f5f;white-space:pre;letter-spacing:0.000px;">+00:02.31</div>
<div style="position:absolute;left:813px;top:707px;width:427px;height:1px;background:#e4e4e4"></div>
<div style="position:absolute;left:823.5px;top:718.88px;font:normal 11.9px/11.9px 'Liberation Mono', monospace;color:#1f1f1f;white-space:pre;letter-spacing:0.000px;transform:scaleY(0.95);transform-origin:0 9.12px;">PROMPTS_STATE_CHANGED</div>
<div style="position:absolute;left:1166px;top:713px;width:64px;height:20px;background:#f0f0f0;border-radius:3px"></div>
<div style="position:absolute;left:1172.5px;top:718.60px;font:normal 9.4px/9.4px 'Liberation Mono', monospace;color:#5f5f5f;white-space:pre;letter-spacing:0.000px;">+00:07.70</div>
<div style="position:absolute;left:813px;top:738px;width:427px;height:1px;background:#e4e4e4"></div>
<div style="position:absolute;left:823.5px;top:749.88px;font:normal 11.9px/11.9px 'Liberation Mono', monospace;color:#1f1f1f;white-space:pre;letter-spacing:0.000px;transform:scaleY(0.95);transform-origin:0 9.12px;">RESOLUTION_CHANGED</div>
<div style="position:absolute;left:1166px;top:744px;width:64px;height:20px;background:#f0f0f0;border-radius:3px"></div>
<div style="position:absolute;left:1172.5px;top:749.60px;font:normal 9.4px/9.4px 'Liberation Mono', monospace;color:#5f5f5f;white-space:pre;letter-spacing:0.000px;">+00:00.59</div>
<div style="position:absolute;left:813px;top:769px;width:427px;height:1px;background:#e4e4e4"></div>
<div style="position:absolute;left:1240px;top:210px;width:15px;height:560px;background:#fafafa"></div>
<svg style="left:1242px;top:214px" width="11" height="9" viewBox="0 0 11 9"><path d="M5.5 1 L10 8 H1 Z" fill="#8a8a8a"/></svg>
<svg style="left:1242px;top:758px" width="11" height="9" viewBox="0 0 11 9"><path d="M1 1 H10 L5.5 8 Z" fill="#8a8a8a"/></svg>
<div style="position:absolute;left:1243px;top:311px;width:9px;height:188px;background:#8a8a8a;border-radius:4.5px"></div>
<div style="position:absolute;left:1255px;top:184px;width:1px;height:586px;background:#cccccc"></div>
<div style="position:absolute;left:1256px;top:184px;width:1px;height:586px;background:#f3f3f3"></div>
<div style="position:absolute;left:1257px;top:184px;width:1px;height:586px;background:#d6d6d6"></div>
<div style="position:absolute;left:1258px;top:184px;width:656px;height:41px;background:#e8e8e8"></div>
<div style="position:absolute;left:1258px;top:224px;width:656px;height:1px;background:#dddddd"></div>
<div style="position:absolute;left:1268.8px;top:199.68px;font:normal 11.9px/11.9px 'Liberation Mono', monospace;color:#1f1f1f;white-space:pre;letter-spacing:0.000px;transform:scaleY(0.95);transform-origin:0 9.12px;">State</div>
<div style="position:absolute;left:1629px;top:189px;width:279px;height:30px;background:#fafafa;border:1px solid #dedede;border-radius:3px"></div>
<div style="position:absolute;left:1693px;top:189px;width:58px;height:30px;background:#e0e0e0;border:1px solid #d4d4d4"></div>
<div style="position:absolute;left:1800px;top:190px;width:1px;height:28px;background:#dedede"></div>
<div style="position:absolute;left:1857px;top:190px;width:1px;height:28px;background:#dedede"></div>
<div style="position:absolute;left:1640.5px;top:200.18px;font:normal 11.9px/11.9px 'Liberation Mono', monospace;color:#1f1f1f;white-space:pre;letter-spacing:0.000px;transform:scaleY(0.95);transform-origin:0 9.12px;">Action</div>
<div style="position:absolute;left:1704.5px;top:200.18px;font:normal 11.9px/11.9px 'Liberation Mono', monospace;color:#1f1f1f;white-space:pre;letter-spacing:0.000px;transform:scaleY(0.95);transform-origin:0 9.12px;">State</div>
<div style="position:absolute;left:1761.5px;top:200.18px;font:normal 11.9px/11.9px 'Liberation Mono', monospace;color:#1f1f1f;white-space:pre;letter-spacing:0.000px;transform:scaleY(0.95);transform-origin:0 9.12px;">Diff</div>
<div style="position:absolute;left:1811.5px;top:200.18px;font:normal 11.9px/11.9px 'Liberation Mono', monospace;color:#1f1f1f;white-space:pre;letter-spacing:0.000px;transform:scaleY(0.95);transform-origin:0 9.12px;">Trace</div>
<div style="position:absolute;left:1869px;top:200.18px;font:normal 11.9px/11.9px 'Liberation Mono', monospace;color:#1f1f1f;white-space:pre;letter-spacing:0.000px;transform:scaleY(0.95);transform-origin:0 9.12px;">Test</div>
<div style="position:absolute;left:1258px;top:225px;width:656px;height:31px;background:#f3f3f3"></div>
<div style="position:absolute;left:1260px;top:227px;width:42px;height:29px;background:#ffffff"></div>
<div style="position:absolute;left:1258px;top:256px;width:656px;height:1px;background:#dddddd"></div>
<div style="position:absolute;left:1268.7px;top:236.42px;font:normal 12.5px/12.5px 'Liberation Sans', sans-serif;color:#1f1f1f;white-space:pre;letter-spacing:0.000px;">Tree</div>
<div style="position:absolute;left:1312.5px;top:236.42px;font:normal 12.5px/12.5px 'Liberation Sans', sans-serif;color:#1f1f1f;white-space:pre;letter-spacing:0.000px;">Chart</div>
<div style="position:absolute;left:1364px;top:236.42px;font:normal 12.5px/12.5px 'Liberation Sans', sans-serif;color:#1f1f1f;white-space:pre;letter-spacing:0.000px;">Raw</div>
<div style="position:absolute;left:1258px;top:257px;width:656px;height:513px;background:#ffffff"></div>
<svg style="left:1259.8px;top:272px" width="8" height="8" viewBox="0 0 8 8"><path d="M0 0.3 L7 3.8 L0 7.3 Z" fill="#2350d2"/></svg>
<div style="position:absolute;left:1273.8px;top:270.88px;font:normal 11.9px/11.9px 'Liberation Mono', monospace;color:#2350d2;white-space:pre;letter-spacing:0.000px;transform:scaleY(0.95);transform-origin:0 9.12px;">enactorPos</div>
<div style="position:absolute;left:1350.45px;top:272.37px;font:normal 8px/8px 'Liberation Mono', monospace;color:#4f4236;white-space:pre;letter-spacing:-0.300px;">(pin)</div>
<div style="position:absolute;left:1375.05px;top:270.88px;font:normal 11.9px/11.9px 'Liberation Mono', monospace;color:#2350d2;white-space:pre;letter-spacing:0.000px;transform:scaleY(0.95);transform-origin:0 9.12px;">:</div>
<div style="position:absolute;left:1389.35px;top:270.88px;font:normal 11.9px/11.9px 'Liberation Mono', monospace;color:#b08050;white-space:pre;letter-spacing:0.000px;transform:scaleY(0.95);transform-origin:0 9.12px;">{ background: &quot;DEFAULT_BA…&quot;, inputs: {…}, autoAdvance: {…}, … }</div>
<svg style="left:1259.8px;top:295.5px" width="8" height="7" viewBox="0 0 8 7"><path d="M0 0 H7.4 L3.7 6.5 Z" fill="#2350d2"/></svg>
<div style="position:absolute;left:1273.8px;top:292.88px;font:normal 11.9px/11.9px 'Liberation Mono', monospace;color:#2350d2;white-space:pre;letter-spacing:0.000px;transform:scaleY(0.95);transform-origin:0 9.12px;">enactorBridge</div>
<div style="position:absolute;left:1371.8999999999999px;top:294.37px;font:normal 8px/8px 'Liberation Mono', monospace;color:#4f4236;white-space:pre;letter-spacing:-0.300px;">(pin)</div>
<div style="position:absolute;left:1284.3px;top:314.88px;font:normal 11.9px/11.9px 'Liberation Mono', monospace;color:#2350d2;white-space:pre;letter-spacing:0.000px;transform:scaleY(0.95);transform-origin:0 9.12px;">status</div>
<div style="position:absolute;left:1332.35px;top:316.37px;font:normal 8px/8px 'Liberation Mono', monospace;color:#4f4236;white-space:pre;letter-spacing:-0.300px;">(pin)</div>
<div style="position:absolute;left:1356.9499999999998px;top:314.88px;font:normal 11.9px/11.9px 'Liberation Mono', monospace;color:#2350d2;white-space:pre;letter-spacing:0.000px;transform:scaleY(0.95);transform-origin:0 9.12px;">:</div>
<div style="position:absolute;left:1371.2499999999998px;top:314.88px;font:normal 11.9px/11.9px 'Liberation Mono', monospace;color:#2b7a2b;white-space:pre;letter-spacing:0.000px;transform:scaleY(0.95);transform-origin:0 9.12px;">&quot;CONNECTED&quot;</div>
<svg style="left:1270.3px;top:339.5px" width="8" height="7" viewBox="0 0 8 7"><path d="M0 0 H7.4 L3.7 6.5 Z" fill="#2350d2"/></svg>
<div style="position:absolute;left:1284.3px;top:336.88px;font:normal 11.9px/11.9px 'Liberation Mono', monospace;color:#2350d2;white-space:pre;letter-spacing:0.000px;transform:scaleY(0.95);transform-origin:0 9.12px;">prompts</div>
<div style="position:absolute;left:1339.5px;top:338.37px;font:normal 8px/8px 'Liberation Mono', monospace;color:#4f4236;white-space:pre;letter-spacing:-0.300px;">(pin)</div>
<svg style="left:1280.8px;top:361.5px" width="8" height="7" viewBox="0 0 8 7"><path d="M0 0 H7.4 L3.7 6.5 Z" fill="#2350d2"/></svg>
<div style="position:absolute;left:1294.8px;top:358.88px;font:normal 11.9px/11.9px 'Liberation Mono', monospace;color:#2350d2;white-space:pre;letter-spacing:0.000px;transform:scaleY(0.95);transform-origin:0 9.12px;">pagesMap</div>
<div style="position:absolute;left:1357.1499999999999px;top:360.37px;font:normal 8px/8px 'Liberation Mono', monospace;color:#4f4236;white-space:pre;letter-spacing:-0.300px;">(pin)</div>
<svg style="left:1291.3px;top:383.5px" width="8" height="7" viewBox="0 0 8 7"><path d="M0 0 H7.4 L3.7 6.5 Z" fill="#2350d2"/></svg>
<div style="position:absolute;left:1305.3px;top:380.88px;font:normal 11.9px/11.9px 'Liberation Mono', monospace;color:#2350d2;white-space:pre;letter-spacing:0.000px;transform:scaleY(0.95);transform-origin:0 9.12px;">d307325103df6cff:54510e48:19d51d72fb6:-74e7</div>
<div style="position:absolute;left:1617.9px;top:382.37px;font:normal 8px/8px 'Liberation Mono', monospace;color:#4f4236;white-space:pre;letter-spacing:-0.300px;">(pin)</div>
<svg style="left:1301.8px;top:405.5px" width="8" height="7" viewBox="0 0 8 7"><path d="M0 0 H7.4 L3.7 6.5 Z" fill="#2350d2"/></svg>
<div style="position:absolute;left:1315.8px;top:402.88px;font:normal 11.9px/11.9px 'Liberation Mono', monospace;color:#2350d2;white-space:pre;letter-spacing:0.000px;transform:scaleY(0.95);transform-origin:0 9.12px;">pageResponse</div>
<div style="position:absolute;left:1406.75px;top:404.37px;font:normal 8px/8px 'Liberation Mono', monospace;color:#4f4236;white-space:pre;letter-spacing:-0.300px;">(pin)</div>
<svg style="left:1312.3px;top:427.5px" width="8" height="7" viewBox="0 0 8 7"><path d="M0 0 H7.4 L3.7 6.5 Z" fill="#2350d2"/></svg>
<div style="position:absolute;left:1326.3px;top:424.88px;font:normal 11.9px/11.9px 'Liberation Mono', monospace;color:#2350d2;white-space:pre;letter-spacing:0.000px;transform:scaleY(0.95);transform-origin:0 9.12px;">promptData</div>
<div style="position:absolute;left:1402.95px;top:426.37px;font:normal 8px/8px 'Liberation Mono', monospace;color:#4f4236;white-space:pre;letter-spacing:-0.300px;">(pin)</div>
<div style="position:absolute;left:1336.8px;top:446.88px;font:normal 11.9px/11.9px 'Liberation Mono', monospace;color:#2350d2;white-space:pre;letter-spacing:0.000px;transform:scaleY(0.95);transform-origin:0 9.12px;">locationName</div>
<div style="position:absolute;left:1427.75px;top:448.37px;font:normal 8px/8px 'Liberation Mono', monospace;color:#4f4236;white-space:pre;letter-spacing:-0.300px;">(pin)</div>
<div style="position:absolute;left:1452.35px;top:446.88px;font:normal 11.9px/11.9px 'Liberation Mono', monospace;color:#2350d2;white-space:pre;letter-spacing:0.000px;transform:scaleY(0.95);transform-origin:0 9.12px;">:</div>
<div style="position:absolute;left:1466.6499999999999px;top:446.88px;font:normal 11.9px/11.9px 'Liberation Mono', monospace;color:#2b7a2b;white-space:pre;letter-spacing:0.000px;transform:scaleY(0.95);transform-origin:0 9.12px;">&quot;UK Hertford&quot;</div>
<div style="position:absolute;left:1336.8px;top:468.88px;font:normal 11.9px/11.9px 'Liberation Mono', monospace;color:#2350d2;white-space:pre;letter-spacing:0.000px;transform:scaleY(0.95);transform-origin:0 9.12px;">locationId</div>
<div style="position:absolute;left:1413.45px;top:470.37px;font:normal 8px/8px 'Liberation Mono', monospace;color:#4f4236;white-space:pre;letter-spacing:-0.300px;">(pin)</div>
<div style="position:absolute;left:1438.05px;top:468.88px;font:normal 11.9px/11.9px 'Liberation Mono', monospace;color:#2350d2;white-space:pre;letter-spacing:0.000px;transform:scaleY(0.95);transform-origin:0 9.12px;">:</div>
<div style="position:absolute;left:1452.35px;top:468.88px;font:normal 11.9px/11.9px 'Liberation Mono', monospace;color:#2b7a2b;white-space:pre;letter-spacing:0.000px;transform:scaleY(0.95);transform-origin:0 9.12px;">&quot;0001&quot;</div>
<div style="position:absolute;left:1336.8px;top:490.88px;font:normal 11.9px/11.9px 'Liberation Mono', monospace;color:#2350d2;white-space:pre;letter-spacing:0.000px;transform:scaleY(0.95);transform-origin:0 9.12px;">useDocumentTemplate</div>
<div style="position:absolute;left:1477.8px;top:492.37px;font:normal 8px/8px 'Liberation Mono', monospace;color:#4f4236;white-space:pre;letter-spacing:-0.300px;">(pin)</div>
<div style="position:absolute;left:1502.3999999999999px;top:490.88px;font:normal 11.9px/11.9px 'Liberation Mono', monospace;color:#2350d2;white-space:pre;letter-spacing:0.000px;transform:scaleY(0.95);transform-origin:0 9.12px;">:</div>
<div style="position:absolute;left:1516.6999999999998px;top:490.88px;font:normal 11.9px/11.9px 'Liberation Mono', monospace;color:#d0501a;white-space:pre;letter-spacing:0.000px;transform:scaleY(0.95);transform-origin:0 9.12px;">true</div>
<div style="position:absolute;left:1326.3px;top:512.88px;font:normal 11.9px/11.9px 'Liberation Mono', monospace;color:#2350d2;white-space:pre;letter-spacing:0.000px;transform:scaleY(0.95);transform-origin:0 9.12px;">processId</div>
<div style="position:absolute;left:1395.8px;top:514.37px;font:normal 8px/8px 'Liberation Mono', monospace;color:#4f4236;white-space:pre;letter-spacing:-0.300px;">(pin)</div>
<div style="position:absolute;left:1420.3999999999999px;top:512.88px;font:normal 11.9px/11.9px 'Liberation Mono', monospace;color:#2350d2;white-space:pre;letter-spacing:0.000px;transform:scaleY(0.95);transform-origin:0 9.12px;">:</div>
<div style="position:absolute;left:1434.6999999999998px;top:512.88px;font:normal 11.9px/11.9px 'Liberation Mono', monospace;color:#2b7a2b;white-space:pre;letter-spacing:0.000px;transform:scaleY(0.95);transform-origin:0 9.12px;">&quot;SignOnComplete&quot;</div>
<div style="position:absolute;left:1326.3px;top:534.88px;font:normal 11.9px/11.9px 'Liberation Mono', monospace;color:#2350d2;white-space:pre;letter-spacing:0.000px;transform:scaleY(0.95);transform-origin:0 9.12px;">promptUrl</div>
<div style="position:absolute;left:1395.8px;top:536.37px;font:normal 8px/8px 'Liberation Mono', monospace;color:#4f4236;white-space:pre;letter-spacing:-0.300px;">(pin)</div>
<div style="position:absolute;left:1420.3999999999999px;top:534.88px;font:normal 11.9px/11.9px 'Liberation Mono', monospace;color:#2350d2;white-space:pre;letter-spacing:0.000px;transform:scaleY(0.95);transform-origin:0 9.12px;">:</div>
<div style="position:absolute;left:1434.6999999999998px;top:534.88px;font:normal 11.9px/11.9px 'Liberation Mono', monospace;color:#2b7a2b;white-space:pre;letter-spacing:0.000px;transform:scaleY(0.95);transform-origin:0 9.12px;">&quot;SignOn/Complete&quot;</div>
<div style="position:absolute;left:1326.3px;top:556.88px;font:normal 11.9px/11.9px 'Liberation Mono', monospace;color:#2350d2;white-space:pre;letter-spacing:0.000px;transform:scaleY(0.95);transform-origin:0 9.12px;">pageUrl</div>
<div style="position:absolute;left:1381.5px;top:558.37px;font:normal 8px/8px 'Liberation Mono', monospace;color:#4f4236;white-space:pre;letter-spacing:-0.300px;">(pin)</div>
<div style="position:absolute;left:1406.1px;top:556.88px;font:normal 11.9px/11.9px 'Liberation Mono', monospace;color:#2350d2;white-space:pre;letter-spacing:0.000px;transform:scaleY(0.95);transform-origin:0 9.12px;">:</div>
<div style="position:absolute;left:1420.3999999999999px;top:556.88px;font:normal 11.9px/11.9px 'Liberation Mono', monospace;color:#2b7a2b;white-space:pre;letter-spacing:0.000px;transform:scaleY(0.95);transform-origin:0 9.12px;">&quot;HTMLPosVite/index.html&quot;</div>
<div style="position:absolute;left:1326.3px;top:578.88px;font:normal 11.9px/11.9px 'Liberation Mono', monospace;color:#2350d2;white-space:pre;letter-spacing:0.000px;transform:scaleY(0.95);transform-origin:0 9.12px;">promptInstanceId</div>
<div style="position:absolute;left:1445.85px;top:580.37px;font:normal 8px/8px 'Liberation Mono', monospace;color:#4f4236;white-space:pre;letter-spacing:-0.300px;">(pin)</div>
<div style="position:absolute;left:1470.4499999999998px;top:578.88px;font:normal 11.9px/11.9px 'Liberation Mono', monospace;color:#2350d2;white-space:pre;letter-spacing:0.000px;transform:scaleY(0.95);transform-origin:0 9.12px;">:</div>
<div style="position:absolute;left:1484.7499999999998px;top:578.88px;font:normal 11.9px/11.9px 'Liberation Mono', monospace;color:#2b7a2b;white-space:pre;letter-spacing:0.000px;transform:scaleY(0.95);transform-origin:0 9.12px;">&quot;d307325103df6cff:54510e48:19d51d72fb6:-74e7&quot;</div>
<div style="position:absolute;left:1326.3px;top:600.88px;font:normal 11.9px/11.9px 'Liberation Mono', monospace;color:#2350d2;white-space:pre;letter-spacing:0.000px;transform:scaleY(0.95);transform-origin:0 9.12px;">promptTimeout</div>
<div style="position:absolute;left:1424.3999999999999px;top:602.37px;font:normal 8px/8px 'Liberation Mono', monospace;color:#4f4236;white-space:pre;letter-spacing:-0.300px;">(pin)</div>
<div style="position:absolute;left:1448.9999999999998px;top:600.88px;font:normal 11.9px/11.9px 'Liberation Mono', monospace;color:#2350d2;white-space:pre;letter-spacing:0.000px;transform:scaleY(0.95);transform-origin:0 9.12px;">:</div>
<div style="position:absolute;left:1463.2999999999997px;top:600.88px;font:normal 11.9px/11.9px 'Liberation Mono', monospace;color:#d0501a;white-space:pre;letter-spacing:0.000px;transform:scaleY(0.95);transform-origin:0 9.12px;">0</div>
<svg style="left:1312.3px;top:624px" width="8" height="8" viewBox="0 0 8 8"><path d="M0 0.3 L7 3.8 L0 7.3 Z" fill="#2350d2"/></svg>
<div style="position:absolute;left:1326.3px;top:622.88px;font:normal 11.9px/11.9px 'Liberation Mono', monospace;color:#2350d2;white-space:pre;letter-spacing:0.000px;transform:scaleY(0.95);transform-origin:0 9.12px;">locale</div>
<div style="position:absolute;left:1374.35px;top:624.37px;font:normal 8px/8px 'Liberation Mono', monospace;color:#4f4236;white-space:pre;letter-spacing:-0.300px;">(pin)</div>
<div style="position:absolute;left:1398.9499999999998px;top:622.88px;font:normal 11.9px/11.9px 'Liberation Mono', monospace;color:#2350d2;white-space:pre;letter-spacing:0.000px;transform:scaleY(0.95);transform-origin:0 9.12px;">:</div>
<div style="position:absolute;left:1413.2499999999998px;top:622.88px;font:normal 11.9px/11.9px 'Liberation Mono', monospace;color:#b08050;white-space:pre;letter-spacing:0.000px;transform:scaleY(0.95);transform-origin:0 9.12px;">{ language: &quot;en&quot;, country: &quot;GB&quot; }</div>
<div style="position:absolute;left:1326.3px;top:644.88px;font:normal 11.9px/11.9px 'Liberation Mono', monospace;color:#2350d2;white-space:pre;letter-spacing:0.000px;transform:scaleY(0.95);transform-origin:0 9.12px;">viewData</div>
<div style="position:absolute;left:1388.6499999999999px;top:646.37px;font:normal 8px/8px 'Liberation Mono', monospace;color:#4f4236;white-space:pre;letter-spacing:-0.300px;">(pin)</div>
<div style="position:absolute;left:1413.2499999999998px;top:644.88px;font:normal 11.9px/11.9px 'Liberation Mono', monospace;color:#2350d2;white-space:pre;letter-spacing:0.000px;transform:scaleY(0.95);transform-origin:0 9.12px;">:</div>
<div style="position:absolute;left:1427.5499999999997px;top:644.88px;font:normal 11.9px/11.9px 'Liberation Mono', monospace;color:#b08050;white-space:pre;letter-spacing:0.000px;transform:scaleY(0.95);transform-origin:0 9.12px;">{ }</div>
<div style="position:absolute;left:1315.8px;top:666.88px;font:normal 11.9px/11.9px 'Liberation Mono', monospace;color:#2350d2;white-space:pre;letter-spacing:0.000px;transform:scaleY(0.95);transform-origin:0 9.12px;">menuState</div>
<div style="position:absolute;left:1385.3px;top:668.37px;font:normal 8px/8px 'Liberation Mono', monospace;color:#4f4236;white-space:pre;letter-spacing:-0.300px;">(pin)</div>
<div style="position:absolute;left:1409.8999999999999px;top:666.88px;font:normal 11.9px/11.9px 'Liberation Mono', monospace;color:#2350d2;white-space:pre;letter-spacing:0.000px;transform:scaleY(0.95);transform-origin:0 9.12px;">:</div>
<div style="position:absolute;left:1424.1999999999998px;top:666.88px;font:normal 11.9px/11.9px 'Liberation Mono', monospace;color:#b08050;white-space:pre;letter-spacing:0.000px;transform:scaleY(0.95);transform-origin:0 9.12px;">{ }</div>
<div style="position:absolute;left:1294.8px;top:688.88px;font:normal 11.9px/11.9px 'Liberation Mono', monospace;color:#2350d2;white-space:pre;letter-spacing:0.000px;transform:scaleY(0.95);transform-origin:0 9.12px;">pageUrl</div>
<div style="position:absolute;left:1350.0px;top:690.37px;font:normal 8px/8px 'Liberation Mono', monospace;color:#4f4236;white-space:pre;letter-spacing:-0.300px;">(pin)</div>
<div style="position:absolute;left:1374.6px;top:688.88px;font:normal 11.9px/11.9px 'Liberation Mono', monospace;color:#2350d2;white-space:pre;letter-spacing:0.000px;transform:scaleY(0.95);transform-origin:0 9.12px;">:</div>
<div style="position:absolute;left:1388.8999999999999px;top:688.88px;font:normal 11.9px/11.9px 'Liberation Mono', monospace;color:#2b7a2b;white-space:pre;letter-spacing:0.000px;transform:scaleY(0.95);transform-origin:0 9.12px;">&quot;HTMLPosVite/index.html&quot;</div>
<div style="position:absolute;left:1294.8px;top:710.88px;font:normal 11.9px/11.9px 'Liberation Mono', monospace;color:#2350d2;white-space:pre;letter-spacing:0.000px;transform:scaleY(0.95);transform-origin:0 9.12px;">controllerInstanceId</div>
<div style="position:absolute;left:1442.95px;top:712.37px;font:normal 8px/8px 'Liberation Mono', monospace;color:#4f4236;white-space:pre;letter-spacing:-0.300px;">(pin)</div>
<div style="position:absolute;left:1467.55px;top:710.88px;font:normal 11.9px/11.9px 'Liberation Mono', monospace;color:#2350d2;white-space:pre;letter-spacing:0.000px;transform:scaleY(0.95);transform-origin:0 9.12px;">:</div>
<div style="position:absolute;left:1481.85px;top:710.88px;font:normal 11.9px/11.9px 'Liberation Mono', monospace;color:#2b7a2b;white-space:pre;letter-spacing:0.000px;transform:scaleY(0.95);transform-origin:0 9.12px;">&quot;d307325103df6cff:54510e48:19d51d72fb6:-74e7&quot;</div>
<svg style="left:1280.8px;top:734px" width="8" height="8" viewBox="0 0 8 8"><path d="M0 0.3 L7 3.8 L0 7.3 Z" fill="#2350d2"/></svg>
<div style="position:absolute;left:1294.8px;top:732.88px;font:normal 11.9px/11.9px 'Liberation Mono', monospace;color:#2350d2;white-space:pre;letter-spacing:0.000px;transform:scaleY(0.95);transform-origin:0 9.12px;">activePromptIds</div>
<div style="position:absolute;left:1407.2px;top:734.37px;font:normal 8px/8px 'Liberation Mono', monospace;color:#4f4236;white-space:pre;letter-spacing:-0.300px;">(pin)</div>
<div style="position:absolute;left:1431.8px;top:732.88px;font:normal 11.9px/11.9px 'Liberation Mono', monospace;color:#2350d2;white-space:pre;letter-spacing:0.000px;transform:scaleY(0.95);transform-origin:0 9.12px;">:</div>
<div style="position:absolute;left:1446.1px;top:732.88px;font:normal 11.9px/11.9px 'Liberation Mono', monospace;color:#b08050;white-space:pre;letter-spacing:0.000px;transform:scaleY(0.95);transform-origin:0 9.12px;">[&quot;d307325103…&quot;, &quot;d307325103…&quot;, &quot;d307325103…&quot;, &quot;d307325103…&quot;, …]</div>
<svg style="left:1280.8px;top:756px" width="8" height="8" viewBox="0 0 8 8"><path d="M0 0.3 L7 3.8 L0 7.3 Z" fill="#2350d2"/></svg>
<div style="position:absolute;left:1294.8px;top:754.88px;font:normal 11.9px/11.9px 'Liberation Mono', monospace;color:#2350d2;white-space:pre;letter-spacing:0.000px;transform:scaleY(0.95);transform-origin:0 9.12px;">activeDialogIds</div>
<div style="position:absolute;left:1407.2px;top:756.37px;font:normal 8px/8px 'Liberation Mono', monospace;color:#4f4236;white-space:pre;letter-spacing:-0.300px;">(pin)</div>
<div style="position:absolute;left:1431.8px;top:754.88px;font:normal 11.9px/11.9px 'Liberation Mono', monospace;color:#2350d2;white-space:pre;letter-spacing:0.000px;transform:scaleY(0.95);transform-origin:0 9.12px;">:</div>
<div style="position:absolute;left:1446.1px;top:754.88px;font:normal 11.9px/11.9px 'Liberation Mono', monospace;color:#b08050;white-space:pre;letter-spacing:0.000px;transform:scaleY(0.95);transform-origin:0 9.12px;">[ ]</div>
<div style="position:absolute;left:1903px;top:257px;width:11px;height:497px;background:#fafafa"></div>
<svg style="left:1905px;top:261px" width="11" height="9" viewBox="0 0 11 9"><path d="M5.5 1 L10 8 H1 Z" fill="#8a8a8a"/></svg>
<svg style="left:1905px;top:743px" width="11" height="9" viewBox="0 0 11 9"><path d="M1 1 H10 L5.5 8 Z" fill="#8a8a8a"/></svg>
<div style="position:absolute;left:1906px;top:275px;width:9px;height:258px;background:#8a8a8a;border-radius:4.5px"></div>
<div style="position:absolute;left:1258px;top:754px;width:656px;height:16px;background:#fafafa"></div>
<svg style="left:1262px;top:757px" width="9" height="11" viewBox="0 0 9 11"><path d="M8 1 V10 L1 5.5 Z" fill="#8a8a8a"/></svg>
<svg style="left:1889px;top:757px" width="9" height="11" viewBox="0 0 9 11"><path d="M1 1 V10 L8 5.5 Z" fill="#8a8a8a"/></svg>
<div style="position:absolute;left:1276px;top:758px;width:368px;height:9px;background:#8a8a8a;border-radius:4.5px"></div>
<div style="position:absolute;left:813px;top:770px;width:1101px;height:1px;background:#dddddd"></div>
<div style="position:absolute;left:1215.5px;top:779.15px;font:normal 10.9px/10.9px 'Liberation Mono', monospace;color:#1f1f1f;white-space:pre;letter-spacing:0.000px;transform:scaleY(0.95);transform-origin:0 8.35px;">PROMPTS_STATE_CHANGED</div>
<div style="position:absolute;left:1359.38px;top:779.15px;font:normal 10.9px/10.9px 'Liberation Mono', monospace;color:#8a8a8a;white-space:pre;letter-spacing:0.000px;transform:scaleY(0.95);transform-origin:0 8.35px;">(50)</div>
<svg style="left:828px;top:792px" width="15" height="17" viewBox="0 0 15 17"><path d="M0 0 L14 8.5 L0 17 Z" fill="#222"/></svg>
<div style="position:absolute;left:849px;top:792px;width:884px;height:18px;background:linear-gradient(#eaeaea,#fefefe);border-radius:9px"></div>
<div style="position:absolute;left:854px;top:795px;width:866px;height:11px;background:linear-gradient(#f5f5f5,#e8e8e8 55%,#f0f0f0);border:1px solid #c4c4c4;border-radius:6px"></div>
<div style="position:absolute;left:1709px;top:792px;width:18px;height:18px;background:#fff;border-radius:50%;border:1px solid #cfcfcf;box-shadow:0 1px 2px rgba(0,0,0,0.3)"></div>
<svg style="left:1743px;top:792px" width="10" height="16" viewBox="0 0 10 16"><path d="M8.5 1.5 L2 8 L8.5 14.5" fill="none" stroke="#222" stroke-width="2.2"/></svg>
<svg style="left:1774px;top:792px" width="10" height="16" viewBox="0 0 10 16"><path d="M1.5 1.5 L8 8 L1.5 14.5" fill="none" stroke="#8a8a8a" stroke-width="2.2"/></svg>
<div style="position:absolute;left:1797px;top:786px;width:1px;height:30px;background:#dddddd"></div>
<div style="position:absolute;left:1812.6px;top:794.59px;font:normal 12.3px/12.3px 'Liberation Sans', sans-serif;color:#1f1f1f;white-space:pre;letter-spacing:0.000px;">Live</div>
<div style="position:absolute;left:1846px;top:786px;width:33px;height:30px;background:#555555"></div>
<div style="position:absolute;left:1855.5px;top:794.59px;font:normal 12.3px/12.3px 'Liberation Sans', sans-serif;color:#ffffff;white-space:pre;letter-spacing:0.000px;">1x</div>
<div style="position:absolute;left:1889.5px;top:794.59px;font:normal 12.3px/12.3px 'Liberation Sans', sans-serif;color:#1f1f1f;white-space:pre;letter-spacing:0.000px;">2x</div>
<div style="position:absolute;left:813px;top:830px;width:1101px;height:1px;background:#dddddd"></div>
<div style="position:absolute;left:819px;top:837px;width:36px;height:20px;border:1px solid #e2e2e2"></div>
<div style="position:absolute;left:857px;top:837px;width:36px;height:20px;border:1px solid #e2e2e2"></div>
<div style="position:absolute;left:897px;top:837px;width:1px;height:20px;background:#e2e2e2"></div>
<svg style="left:830px;top:843px" width="14" height="10" viewBox="0 0 14 10"><path d="M7 0 V10 M3 5 L7 9 L11 5" fill="none" stroke="#333" stroke-width="1.6"/></svg>
<svg style="left:868px;top:843px" width="14" height="10" viewBox="0 0 14 10"><path d="M7 1 V10 M3 5 L7 1 L11 5" fill="none" stroke="#333" stroke-width="1.6"/></svg>
<div style="position:absolute;left:1183.5px;top:846.62px;font:normal 12.5px/12.5px 'Liberation Sans', sans-serif;color:#1f1f1f;white-space:pre;letter-spacing:0.000px;">Inspector</div>
<div style="position:absolute;left:1259.5px;top:846.62px;font:normal 12.5px/12.5px 'Liberation Sans', sans-serif;color:#1f1f1f;white-space:pre;letter-spacing:0.000px;">Log monitor</div>
<div style="position:absolute;left:1352px;top:846.62px;font:normal 12.5px/12.5px 'Liberation Sans', sans-serif;color:#1f1f1f;white-space:pre;letter-spacing:0.000px;">Chart</div>
<div style="position:absolute;left:1404.5px;top:846.62px;font:normal 12.5px/12.5px 'Liberation Sans', sans-serif;color:#1f1f1f;white-space:pre;letter-spacing:0.000px;">RTK Query</div>
<div style="position:absolute;left:1750px;top:837px;width:1px;height:20px;background:#e2e2e2"></div>
<div style="position:absolute;left:1757px;top:836px;width:32px;height:20px;background:#b3c7ee"></div>
<svg style="left:1757px;top:831px" width="32" height="19" viewBox="0 0 32 19"><path d="M6 1 L13 7.5 Q22 6 27 12 Q30 16 30 19 H3 Q2 12 6 8 Z" fill="#9ab5e8"/><path d="M10 19 Q10 14 15 13 L18 13" fill="none" stroke="#1a56d8" stroke-width="2"/><path d="M17 10.5 L20.5 13 L17 15.5 Z" fill="#1a56d8"/><path d="M19.5 16 Q22 15 23 19" fill="none" stroke="#1a56d8" stroke-width="2"/></svg>
<div style="position:absolute;left:1793px;top:837px;width:36px;height:20px;border:1px solid #e2e2e2"></div>
<div style="position:absolute;left:1833px;top:837px;width:1px;height:20px;background:#e2e2e2"></div>
<div style="position:absolute;left:1838px;top:837px;width:35px;height:20px;border:1px solid #e2e2e2"></div>
<div style="position:absolute;left:1876px;top:837px;width:36px;height:20px;border:1px solid #e2e2e2"></div>
<svg style="left:1800px;top:844px" width="8" height="6" viewBox="0 0 8 6"><path d="M1 0.8 L6 6" stroke="#333" stroke-width="1.8"/></svg>
<svg style="left:1848px;top:844px" width="16" height="6" viewBox="0 0 16 6"><path d="M1.5 6 V2.5 Q1.5 1.5 2.5 1.5 H13.5 Q14.5 1.5 14.5 2.5 V6 M8 1.5 V6" fill="none" stroke="#333" stroke-width="1.5"/></svg>
<svg style="left:1882px;top:843px" width="24" height="7" viewBox="0 0 24 7"><path d="M5.5 1 Q3 4 3 7 M9 3.5 Q7.5 5 7.5 7 M18.5 1 Q21 4 21 7 M15 3.5 Q16.5 5 16.5 7" fill="none" stroke="#333" stroke-width="1.5"/><circle cx="12" cy="7" r="1" fill="#333"/></svg>
</body></html>
